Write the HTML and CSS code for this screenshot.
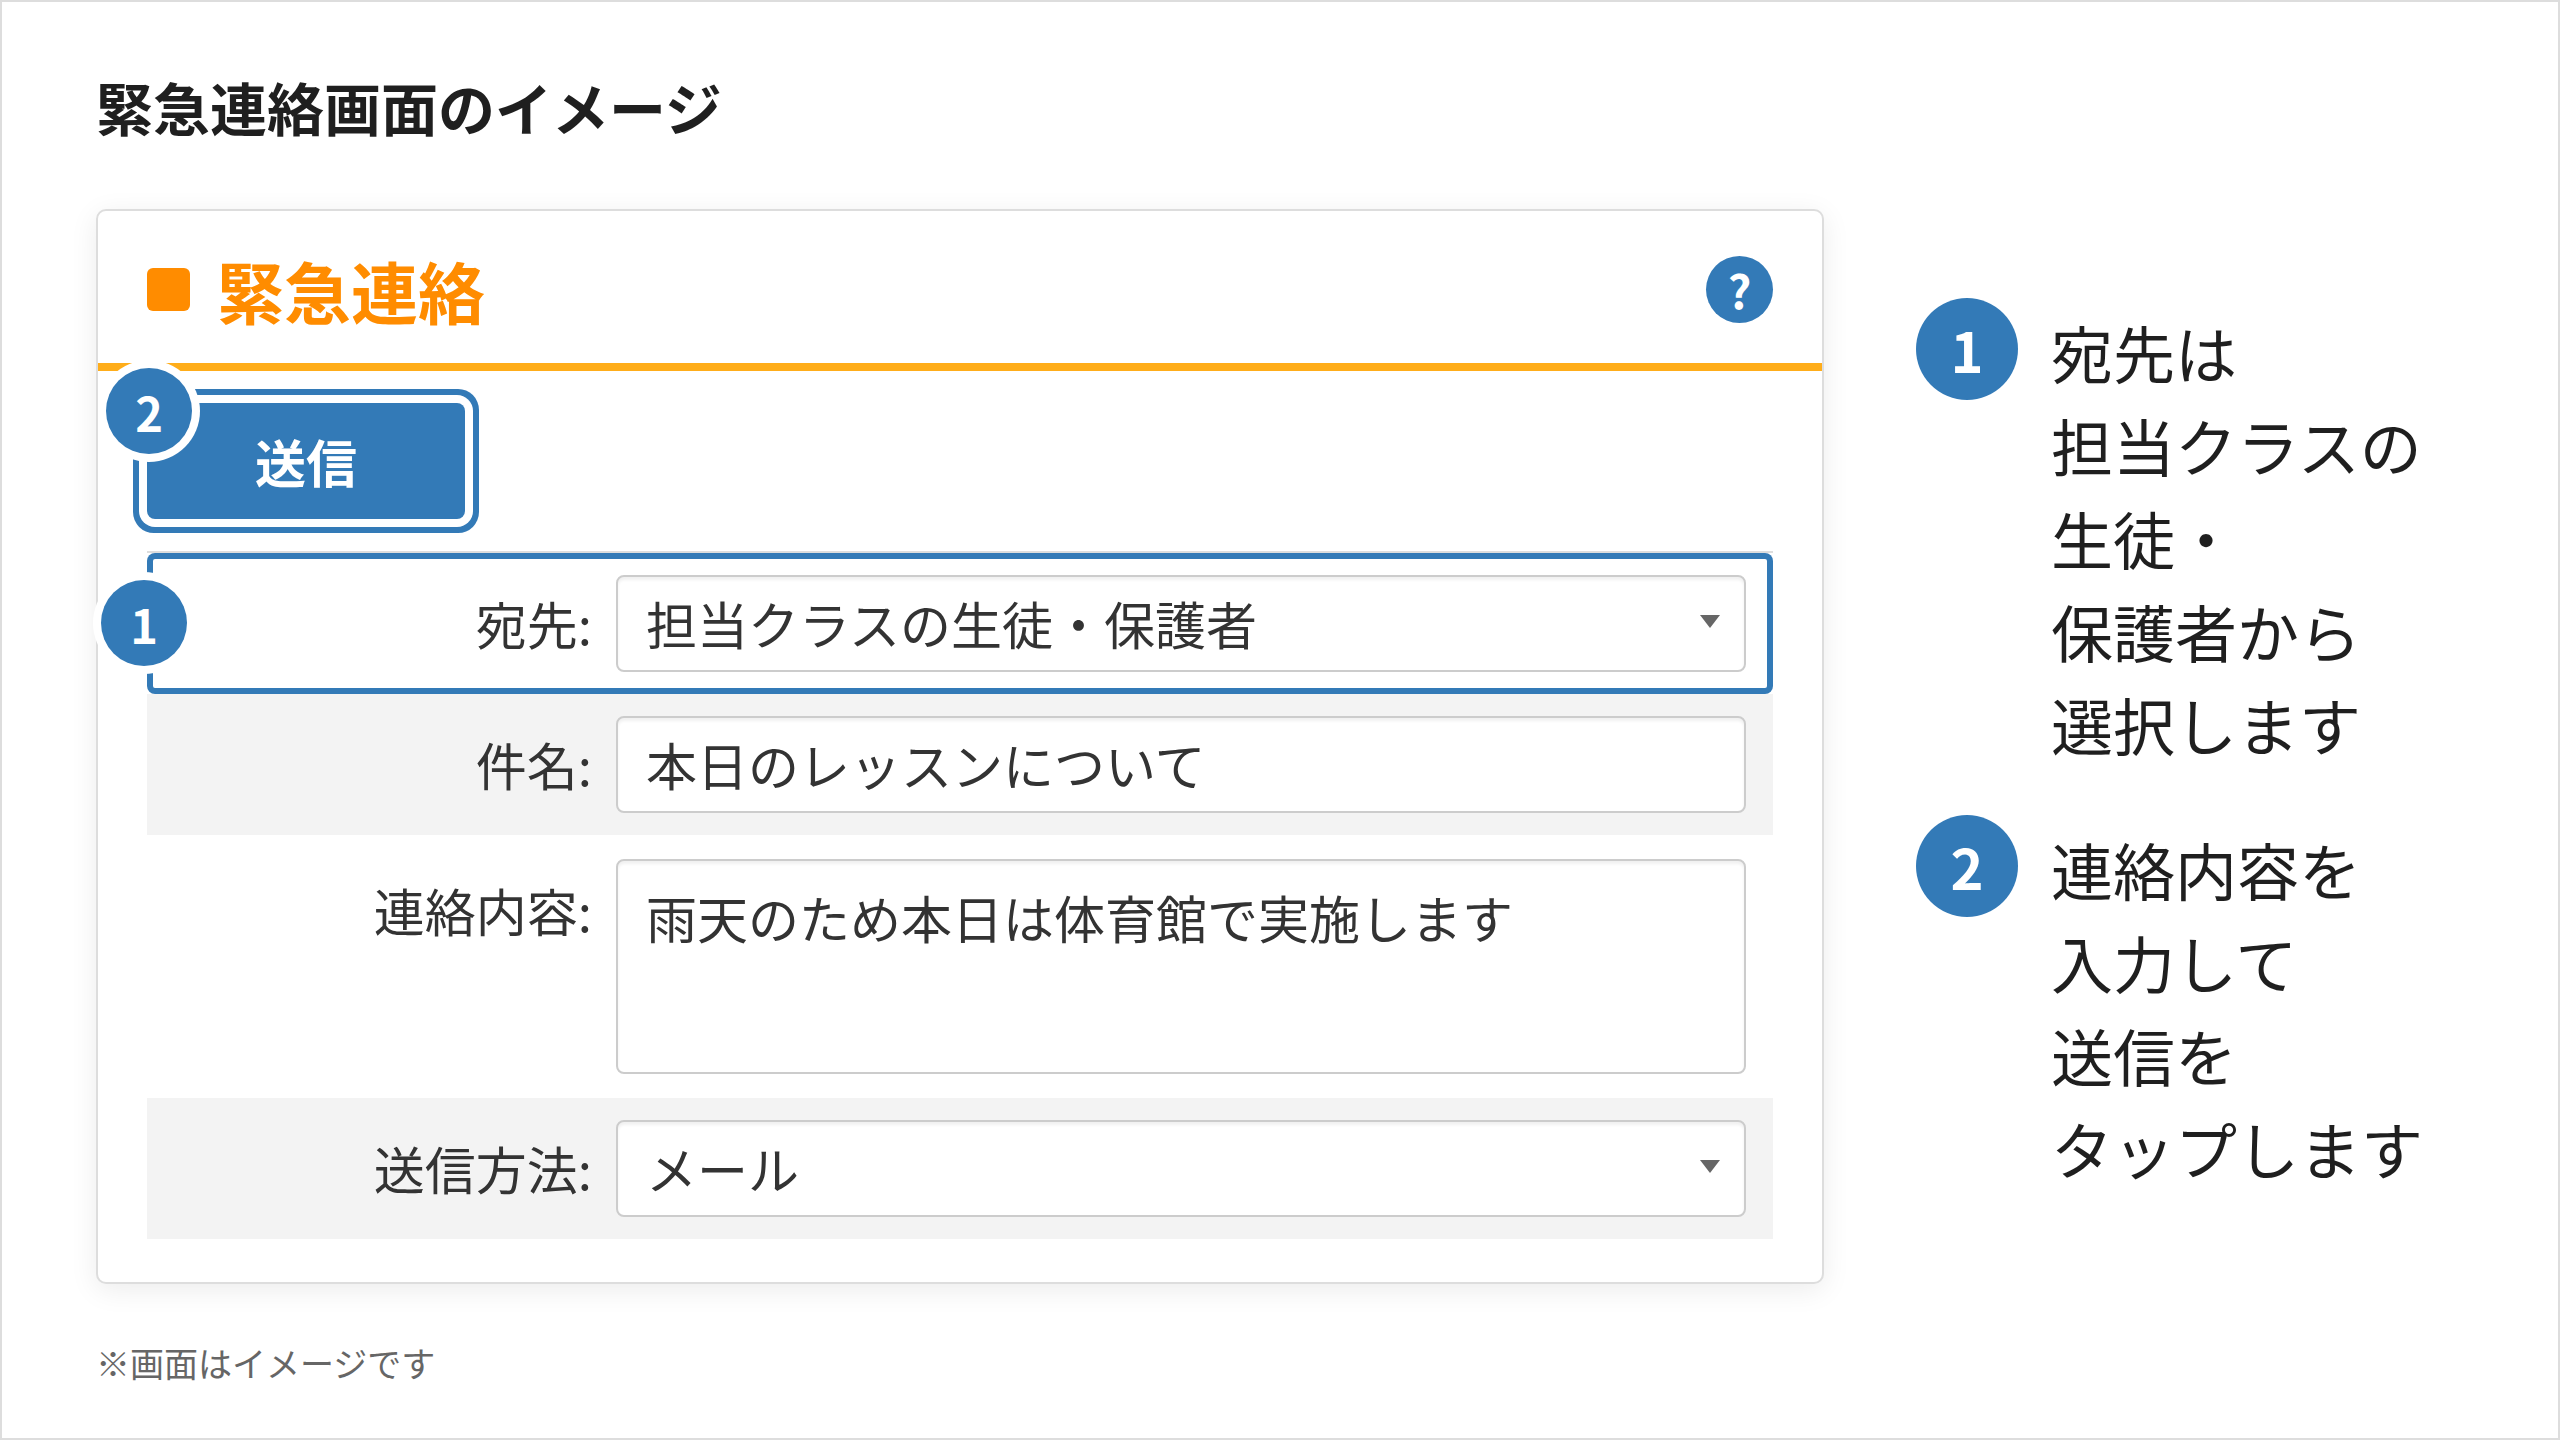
FILE: index.html
```
<!DOCTYPE html>
<html lang="ja">
<head>
  <meta charset="UTF-8">
  <meta name="viewport" content="width=device-width, initial-scale=1.0">
  <title>緊急連絡画面のイメージ</title>
  <link rel="stylesheet" href="styles.css">
</head>
<body>
  <main class="page">
    <h1>緊急連絡画面のイメージ</h1>

    <div class="columns">
      <form class="card">
        <div class="card-header">
          <span class="mark"></span>
          <h2>緊急連絡</h2>
          <button type="button" class="help" aria-label="ヘルプ">?</button>
        </div>

        <div class="toolbar">
          <div class="send-wrap">
            <button type="button" class="send">送信</button>
            <span class="badge badge-send">2</span>
          </div>
        </div>

        <div class="fields">
          <div class="row selected">
            <span class="badge badge-row">1</span>
            <label for="atesaki">宛先:</label>
            <div class="select">
              <select id="atesaki">
                <option>担当クラスの生徒・保護者</option>
              </select>
            </div>
          </div>
          <div class="row gray">
            <label for="kenmei">件名:</label>
            <input type="text" id="kenmei" value="本日のレッスンについて">
          </div>
          <div class="row row-text">
            <label for="naiyo">連絡内容:</label>
            <textarea id="naiyo">雨天のため本日は体育館で実施します</textarea>
          </div>
          <div class="row gray">
            <label for="hoho">送信方法:</label>
            <div class="select">
              <select id="hoho">
                <option>メール</option>
              </select>
            </div>
          </div>
        </div>
      </form>

      <div class="steps">
        <div class="step">
          <span class="number">1</span>
          <p>宛先は<br>担当クラスの<br>生徒・<br>保護者から<br>選択します</p>
        </div>
        <div class="step">
          <span class="number">2</span>
          <p>連絡内容を<br>入力して<br>送信を<br>タップします</p>
        </div>
      </div>
    </div>

    <p class="note">※画面はイメージです</p>
  </main>
</body>
</html>
```
FILE: styles.css
```
* {
  box-sizing: border-box;
}

body {
  margin: 0;
  font-family: 'Noto Sans CJK JP', sans-serif;
  background-color: #fff;
  color: #1f1f1f;
}

button, input, select, textarea {
  font-family: inherit;
}

h1, h2, p {
  margin: 0;
}

.page {
  min-height: 100vh;
  padding: 62px 94px 48px;
  border: 2px solid #ddd;
}

h1 {
  font-size: 57px;
  line-height: 84px;
  margin-bottom: 61px;
}

.columns {
  display: grid;
  grid-template-columns: minmax(0, 1fr) 548px;
  gap: 92px;
  align-items: center;
}

/* ---- card ---- */
.card {
  border: 2px solid #ddd;
  border-radius: 10px;
  background-color: #fff;
  box-shadow: 0 6px 28px rgba(0, 0, 0, 0.08);
  padding-bottom: 43px;
}

.card-header {
  display: flex;
  align-items: center;
  padding: 45px 49px 40px;
  border-bottom: 8px solid #ffad1a;
}

.mark {
  width: 43px;
  height: 43px;
  border-radius: 6px;
  background-color: #ff8c00;
}

h2 {
  margin-left: 27px;
  font-size: 67px;
  line-height: 67px;
  color: #ff8c00;
}

.help {
  margin-left: auto;
  width: 67px;
  height: 67px;
  padding: 0;
  border: none;
  border-radius: 50%;
  background-color: #337ab7;
  color: white;
  font-size: 46px;
  font-weight: bold;
  line-height: 67px;
  cursor: pointer;
}

.toolbar {
  display: flex;
  padding: 32px 49px;
}

.send-wrap {
  position: relative;
}

.send {
  display: block;
  width: 318px;
  height: 116px;
  border: none;
  border-radius: 8px;
  background-color: #337ab7;
  box-shadow: 0 0 0 8px #fff, 0 0 0 14px #337ab7;
  color: white;
  font-size: 51px;
  font-weight: bold;
  cursor: pointer;
}

.badge {
  position: absolute;
  width: 86px;
  height: 86px;
  border-radius: 50%;
  background-color: #337ab7;
  box-shadow: 0 0 0 8px #fff;
  color: white;
  font-size: 47px;
  font-weight: bold;
  line-height: 88px;
  text-align: center;
}

.badge-send {
  top: -35px;
  left: -41px;
}

.badge-row {
  top: 27px;
  left: -46px;
}

/* ---- form rows ---- */
.fields {
  margin: 0 49px;
  border-top: 2px solid #ddd;
}

.row {
  position: relative;
  display: grid;
  grid-template-columns: 445px minmax(0, 1fr);
  column-gap: 24px;
  align-items: center;
  padding: 22px 27px 22px 0;
}

.gray {
  background-color: #f3f3f3;
}

.selected {
  border-radius: 8px;
  box-shadow: inset 0 0 0 6px #337ab7;
}

.row-text {
  align-items: start;
  padding-top: 24px;
  padding-bottom: 24px;
}

label {
  font-size: 51px;
  line-height: 77px;
  color: #333;
  text-align: right;
}

.row-text label {
  padding-top: 13px;
}

input, select, textarea {
  display: block;
  width: 100%;
  height: 97px;
  padding: 0 28px 2px;
  border: 2px solid #ccc;
  border-radius: 8px;
  background-color: #fff;
  box-shadow: inset 0 3px 3px rgba(0, 0, 0, 0.06);
  color: #333;
  font-size: 51px;
}

select {
  appearance: none;
}

textarea {
  height: 215px;
  padding: 18px 28px;
  line-height: 77px;
  resize: none;
}

.select {
  position: relative;
}

.select::after {
  content: "";
  position: absolute;
  top: 40px;
  right: 26px;
  border-left: 10px solid transparent;
  border-right: 10px solid transparent;
  border-top: 13px solid #666;
  pointer-events: none;
}

/* ---- steps ---- */
.steps {
  display: flex;
  flex-direction: column;
  gap: 44px;
}

.step {
  display: flex;
  align-items: flex-start;
  gap: 33px;
}

.number {
  flex: none;
  width: 102px;
  height: 102px;
  border-radius: 50%;
  background-color: #337ab7;
  color: white;
  font-size: 56px;
  font-weight: bold;
  line-height: 102px;
  text-align: center;
}

.step p {
  padding-top: 8px;
  font-size: 62px;
  line-height: 93px;
}

.note {
  margin-top: 54px;
  font-size: 34px;
  line-height: 50px;
  color: #666;
}
```
